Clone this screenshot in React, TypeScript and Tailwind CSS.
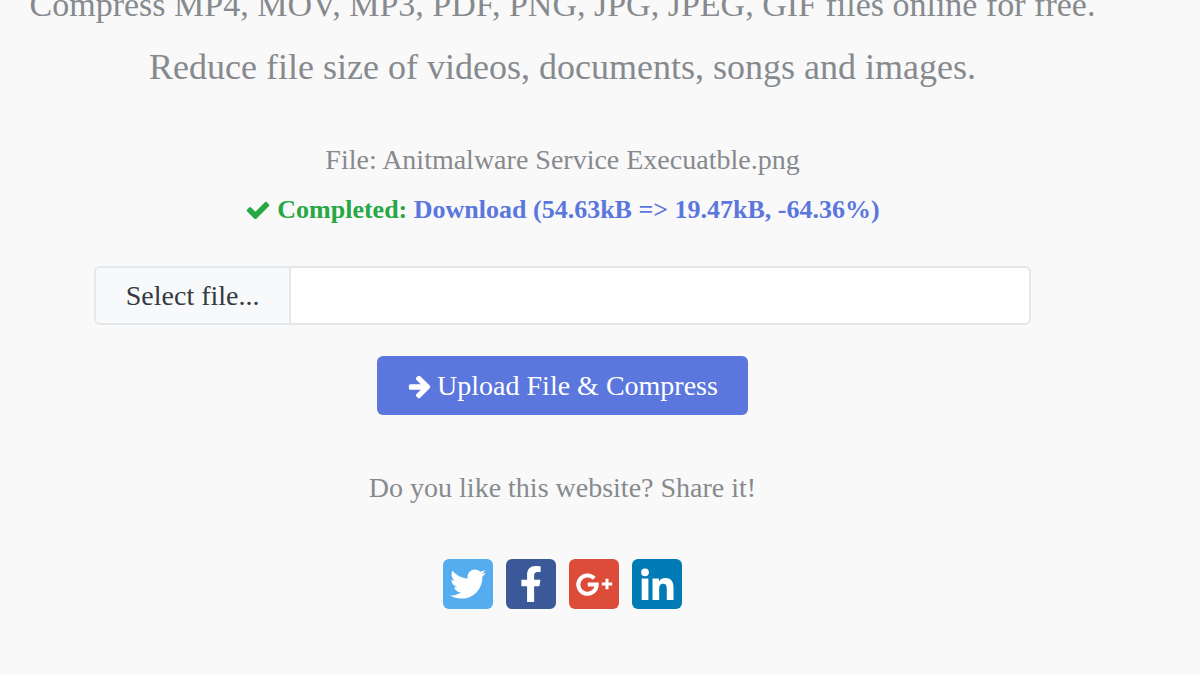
import { useRef, useState } from "react";
import type { ReactNode } from "react";
import { FaFacebookF, FaTwitter } from "react-icons/fa";

function Check({ className }: { className?: string }) {
	return (
		<svg viewBox="0 0 1792 1792" fill="currentColor" className={className} aria-hidden="true">
			<path d="M1671 566q0 40-28 68l-724 724-136 136q-28 28-68 28t-68-28l-136-136-362-362q-28-28-28-68t28-68l136-136q28-28 68-28t68 28l294 295 656-657q28-28 68-28t68 28l136 136q28 28 28 68z" />
		</svg>
	);
}

function ArrowRight({ className }: { className?: string }) {
	return (
		<svg viewBox="0 0 1792 1792" fill="currentColor" className={className} aria-hidden="true">
			<path d="M1600 960q0 54-37 91l-651 651q-39 37-91 37-51 0-90-37l-75-75q-38-38-38-91t38-91l293-293H245q-52 0-84.500-37.500T128 1024V896q0-53 32.500-90.500T245 768h704L656 474q-38-36-38-90t38-90l75-75q38-38 90-38 53 0 91 38l651 651q37 35 37 90z" />
		</svg>
	);
}

function GooglePlus({ className }: { className?: string }) {
	return (
		<svg viewBox="0 0 50 50" fill="none" stroke="currentColor" className={className} aria-hidden="true">
			<path d="M25.200 19.300A9.200 9.200 0 1 0 27.700 25.600H18.800" strokeWidth="4" />
			<path d="M38 19.800v10.400M32.800 25h10.400" strokeWidth="3" />
		</svg>
	);
}

function LinkedIn({ className }: { className?: string }) {
	return (
		<svg viewBox="0 0 50 50" fill="currentColor" className={className} aria-hidden="true">
			<circle cx="13" cy="13.300" r="3.900" />
			<path d="M9.700 19.500h6.700V41H9.700z" />
			<path d="M20.500 19.500h6.400v3c1-1.900 3.200-3.500 6.400-3.500 6.700 0 8.200 4.300 8.200 10.200V41h-6.700V30.500c0-2.600-.1-5.700-3.600-5.700s-4 2.700-4 5.500V41h-6.700z" />
		</svg>
	);
}

const shareLinks: { name: string; color: string; icon: ReactNode }[] = [
	{
		name: "Twitter",
		color: "bg-[#55acee]",
		icon: <FaTwitter className="size-9" />,
	},
	{
		name: "Facebook",
		color: "bg-[#3b5998]",
		icon: <FaFacebookF className="size-9" />,
	},
	{
		name: "Google+",
		color: "bg-[#dd4b39]",
		icon: <GooglePlus className="size-full" />,
	},
	{
		name: "LinkedIn",
		color: "bg-[#007bb6]",
		icon: <LinkedIn className="size-full" />,
	},
];

function FilePicker() {
	const fileInput = useRef<HTMLInputElement>(null);
	const [fileName, setFileName] = useState("");

	return (
		<div className="flex h-[59px] w-full overflow-hidden rounded-md border-2 border-[#e4e7ea] bg-white">
			<button
				type="button"
				onClick={() => fileInput.current?.click()}
				className="shrink-0 cursor-pointer border-r-2 border-[#e4e7ea] bg-[#f8f9fb] px-[30px] text-[#343a40]"
			>
				Select file...
			</button>
			<input
				ref={fileInput}
				type="file"
				className="hidden"
				aria-label="File to compress"
				onChange={(e) => setFileName(e.target.files?.[0]?.name ?? "")}
			/>
			<input
				type="text"
				readOnly
				value={fileName}
				aria-label="Selected file"
				className="min-w-0 grow px-4 text-[#343a40] outline-none"
			/>
		</div>
	);
}

export default function App() {
	return (
		<div className="min-h-screen overflow-hidden bg-[#f9f9f9] pr-[75px] font-['Liberation_Serif',serif] text-[28px] leading-[50px] text-[#868a8e]">
			<main className="flex flex-col items-center text-center">
				<div className="-mt-[27px] leading-[63px] whitespace-nowrap">
					<p className="text-[34px]">
						Compress MP4, MOV, MP3, PDF, PNG, JPG, JPEG, GIF files online for free.
					</p>
					<p className="text-[36px]">
						Reduce file size of videos, documents, songs and images.
					</p>
				</div>

				<div className="mt-9">
					<p>File: Anitmalware Service Execuatble.png</p>
					<p className="flex items-center justify-center text-[26px] font-bold whitespace-pre text-[#28a745]">
						<Check className="mr-1.5 size-[26px]" />
						Completed:{" "}
						<a href="#download" className="text-[#5b77dd]">
							Download (54.63kB =&gt; 19.47kB, -64.36%)
						</a>
					</p>
				</div>

				<form
					className="mt-[31px] flex w-5/6 flex-col items-center gap-[31px]"
					onSubmit={(e) => e.preventDefault()}
				>
					<FilePicker />
					<button
						type="submit"
						className="flex h-[59px] cursor-pointer items-center gap-1 rounded-md bg-[#5b77dd] px-[30px] text-white"
					>
						<ArrowRight className="size-[26px]" />
						Upload File &amp; Compress
					</button>
				</form>

				<p className="mt-12">Do you like this website? Share it!</p>

				<div className="mt-[46px] flex gap-[13px]">
					{shareLinks.map((link) => (
						<a
							key={link.name}
							href="#share"
							aria-label={`Share on ${link.name}`}
							className={`flex size-[50px] items-center justify-center rounded-md text-white ${link.color}`}
						>
							{link.icon}
						</a>
					))}
				</div>
			</main>
		</div>
	);
}
